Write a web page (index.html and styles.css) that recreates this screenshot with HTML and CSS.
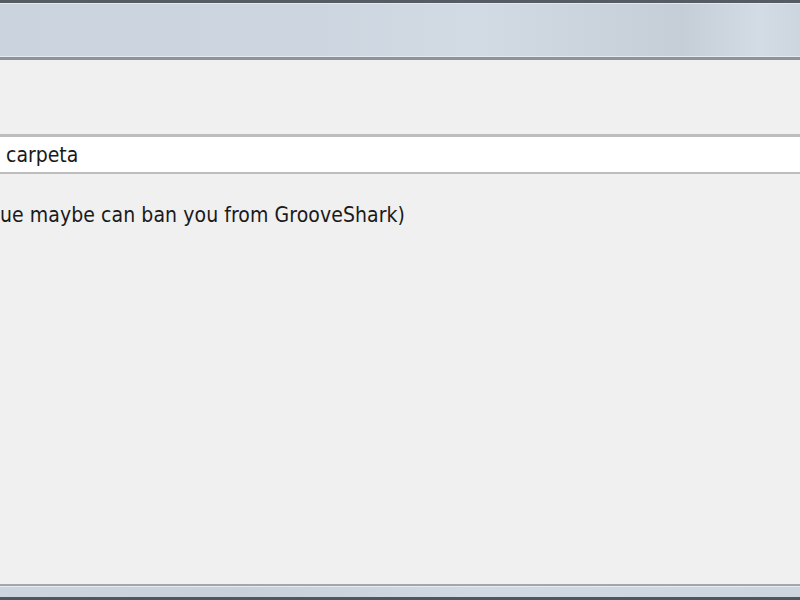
FILE: index.html
```html
<!DOCTYPE html>
<html>
<head>
<meta charset="utf-8">
<link rel="stylesheet" href="styles.css">
</head>
<body>
<div class="window">
  <div class="frame-top"></div>
  <div class="client">
    <div class="field"><span class="field-text">carpeta</span></div>
    <p class="note">ue maybe can ban you from GrooveShark)</p>
  </div>
  <div class="frame-bottom"></div>
</div>
</body>
</html>
```
FILE: styles.css
```css
html, body {
  margin: 0;
  padding: 0;
  width: 800px;
  height: 600px;
  overflow: hidden;
}
.window {
  display: flex;
  flex-direction: column;
  height: 600px;
  background: #f0f0f0;
  font-family: "DejaVu Sans", sans-serif;
  font-stretch: condensed;
  color: #1a1a1a;
}
.frame-top {
  height: 54px;
  border-top: 3px solid #565c64;
  border-bottom: 3px solid #8d949c;
  box-shadow: inset 0 1px 0 #e4e9ef, inset 0 -1px 0 #e4e9ef;
  background: linear-gradient(90deg, #cbd4de 0%, #cdd6e0 40%, #d2dae3 60%, #c5cdd7 85%, #d3dbe4 95%, #cdd5df 100%);
}
.client {
  flex: 1;
  display: flex;
  flex-direction: column;
  padding-top: 74px;
}
.field {
  height: 35px;
  background: #ffffff;
  border-top: 3px solid #bdbdbd;
  border-bottom: 2px solid #bdbdbd;
  display: flex;
  align-items: center;
  padding-left: 6px;
  font-size: 21px;
}
.note {
  margin: 29px 0 0 0;
  font-size: 21px;
  line-height: 24px;
  letter-spacing: 0.08px;
}
.frame-bottom {
  height: 11px;
  border-top: 2px solid #a3a7ac;
  border-bottom: 3px solid #50565e;
  background: linear-gradient(90deg, #cdd5df 0%, #c8d0da 30%, #d1d9e2 60%, #cdd5df 100%);
  box-shadow: inset 0 1px 0 #e6ebf0;
}
```
